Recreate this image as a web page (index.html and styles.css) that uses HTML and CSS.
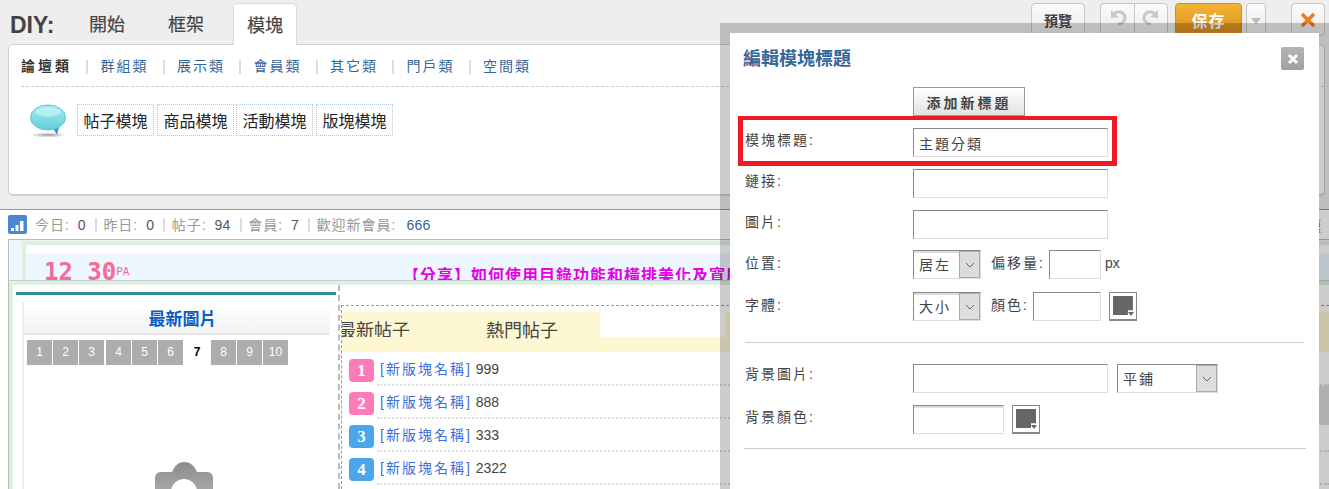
FILE: index.html
```html
<!DOCTYPE html>
<html lang="zh-Hant">
<head>
<meta charset="utf-8">
<title>DIY</title>
<link rel="stylesheet" href="styles.css">
</head>
<body>
<div class="page">
  <header class="toolbar">
    <div class="brand">DIY:</div>
    <nav class="tabs">
      <a class="tab">開始</a>
      <a class="tab">框架</a>
      <a class="tab tab-active">模塊</a>
    </nav>
    <div class="actions">
      <button class="tbtn preview">預覽</button>
      <div class="history">
        <button class="hbtn"><svg width="18" height="17" viewBox="0 0 18 17"><path d="M2 1 L2 9 L10 8 Z" fill="#c8c8c8"/><path d="M5 5 C9 1 16 3 16 9 C16 13 12 15 9 15" fill="none" stroke="#c8c8c8" stroke-width="3"/></svg></button>
        <button class="hbtn"><svg width="18" height="17" viewBox="0 0 18 17"><path d="M16 1 L16 9 L8 8 Z" fill="#c8c8c8"/><path d="M13 5 C9 1 2 3 2 9 C2 13 6 15 9 15" fill="none" stroke="#c8c8c8" stroke-width="3"/></svg></button>
      </div>
      <button class="save">保存</button>
      <button class="drop"><svg width="10" height="6" viewBox="0 0 10 6"><path d="M0 0H10L5 6Z" fill="#bbb"/></svg></button>
      <button class="quit"><svg width="16" height="16" viewBox="0 0 16 16"><path d="M2 2L14 14M14 2L2 14" stroke="#ee7b1c" stroke-width="3.4"/></svg></button>
    </div>
  </header>

  <div class="panel-wrap">
    <section class="panel">
      <div class="cats">
        <a class="cat cat-on">論壇類</a><i class="sep"></i>
        <a class="cat">群組類</a><i class="sep"></i>
        <a class="cat">展示類</a><i class="sep"></i>
        <a class="cat">會員類</a><i class="sep"></i>
        <a class="cat">其它類</a><i class="sep"></i>
        <a class="cat">門戶類</a><i class="sep"></i>
        <a class="cat">空間類</a>
      </div>
      <div class="blocks">
        <svg class="bubble" width="38" height="34" viewBox="0 0 38 34">
          <defs>
            <linearGradient id="bub" x1="0" y1="0" x2="0" y2="1"><stop offset="0" stop-color="#a6eef2"/><stop offset="1" stop-color="#62cfdc"/></linearGradient>
            <radialGradient id="sh"><stop offset="0" stop-color="#999"/><stop offset="1" stop-color="#fff"/></radialGradient>
          </defs>
          <ellipse cx="19" cy="31" rx="18" ry="2.5" fill="url(#sh)"/>
          <path d="M24 24 L28 31 L30 23 Z" fill="#2ea3b4"/>
          <ellipse cx="19" cy="13.500" rx="17.500" ry="12.500" fill="url(#bub)" stroke="#58c4d2"/>
          <ellipse cx="19" cy="8" rx="13" ry="5" fill="#c8f6f8" opacity=".6"/>
        </svg>
        <a class="block">帖子模塊</a>
        <a class="block">商品模塊</a>
        <a class="block">活動模塊</a>
        <a class="block">版塊模塊</a>
      </div>
    </section>
  </div>

  <section class="stats">
    <svg class="stats-icon" width="19" height="19" viewBox="0 0 19 19"><rect width="19" height="19" rx="2" fill="#4a87d3"/><path d="M3 13h3v3H3zM7.500 10h3v6h-3zM12 6h3.500v10H12z" fill="#fff"/></svg>
    <span class="stat">今日: <b>0</b></span>
    <span class="stat">昨日: <b>0</b></span>
    <span class="stat">帖子: <b>94</b></span>
    <span class="stat">會員: <b>7</b></span>
    <span class="stat">歡迎新會員: <b class="stat-new">666</b></span>
    <a class="stats-end">模</a>
  </section>

  <main class="preview-frame">
    <div class="head-band">
      <div class="head-inner">
        <div class="head-blue">
          <span class="clock">12 30<small>PA</small></span>
          <span class="marquee">【分享】如何使用目錄功能和橫排美化及寬屏</span>
        </div>
      </div>
    </div>
    <div class="body-band">
      <div class="body-inner">
        <aside class="left-col">
          <div class="teal"></div>
          <div class="pic-box">
            <h3 class="pic-title">最新圖片</h3>
            <div class="pager">
              <span class="pg">1</span><span class="pg">2</span><span class="pg">3</span><span class="pg">4</span><span class="pg">5</span><span class="pg">6</span><span class="pg pg-on">7</span><span class="pg">8</span><span class="pg">9</span><span class="pg">10</span>
            </div>
            <svg class="camera" width="60" height="40" viewBox="0 0 60 40">
              <defs><linearGradient id="cam" x1="0" y1="0" x2="0" y2="1"><stop offset="0" stop-color="#8c8c8c"/><stop offset="1" stop-color="#b4b4b4"/></linearGradient></defs>
              <path fill-rule="evenodd" fill="url(#cam)" d="M6 10 H17 C20 3 24 0 29 0 C35 0 39 3 42 10 H52 C56 10 58 13 58 16 V40 H0 V16 C0 13 2 10 6 10 Z M29 17 A13 13 0 1 0 29.010 17 Z"/>
            </svg>
          </div>
        </aside>
        <div class="right-col">
          <div class="list-box">
            <div class="list-tabs">
              <span class="ltab ltab-first">最新帖子</span>
              <span class="ltab ltab-second">熱門帖子</span>
              <span class="ltab-gap"></span>
            </div>
            <ul class="list">
              <li class="row"><span class="rank rank-pink">1</span><a class="link">[新版塊名稱]</a> 999</li>
              <li class="row"><span class="rank rank-pink">2</span><a class="link">[新版塊名稱]</a> 888</li>
              <li class="row"><span class="rank rank-blue">3</span><a class="link">[新版塊名稱]</a> 333</li>
              <li class="row"><span class="rank rank-blue">4</span><a class="link">[新版塊名稱]</a> 2322</li>
            </ul>
          </div>
        </div>
      </div>
    </div>
    <div class="side-tab"></div>
  </main>
</div>

<div class="dialog">
  <div class="dialog-head">
    <h2 class="dialog-title">編輯模塊標題</h2>
    <button class="dialog-close"><svg width="12" height="12" viewBox="0 0 12 12"><path d="M2 2L10 10M10 2L2 10" stroke="#fff" stroke-width="3"/></svg></button>
  </div>
  <form class="form">
    <div class="frow frow-add"><span class="flabel"></span><button type="button" class="add">添加新標題</button></div>
    <div class="frow"><label class="flabel">模塊標題:</label><input class="inp inp-full" value="主題分類"></div>
    <div class="frow"><label class="flabel">鏈接:</label><input class="inp inp-full"></div>
    <div class="frow"><label class="flabel">圖片:</label><input class="inp inp-full"></div>
    <div class="frow frow-pos"><label class="flabel">位置:</label>
      <div class="sel sel-s"><span class="sel-text">居左</span><span class="sel-arrow"><svg width="10" height="6" viewBox="0 0 10 6"><path d="M1 1L5 5L9 1" fill="none" stroke="#666"/></svg></span></div>
      <span class="ftext ftext-a">偏移量:</span><input class="inp inp-offset"><span class="ftext-px">px</span>
    </div>
    <div class="frow frow-font"><label class="flabel">字體:</label>
      <div class="sel sel-s"><span class="sel-text">大小</span><span class="sel-arrow"><svg width="10" height="6" viewBox="0 0 10 6"><path d="M1 1L5 5L9 1" fill="none" stroke="#666"/></svg></span></div>
      <span class="ftext ftext-a">顏色:</span><input class="inp inp-color"><span class="swatch swatch-a"><i class="tri"></i></span>
    </div>
    <hr class="rule rule-a">
    <div class="frow frow-bgimg"><label class="flabel">背景圖片:</label><input class="inp inp-full">
      <div class="sel sel-l"><span class="sel-text">平鋪</span><span class="sel-arrow"><svg width="10" height="6" viewBox="0 0 10 6"><path d="M1 1L5 5L9 1" fill="none" stroke="#666"/></svg></span></div>
    </div>
    <div class="frow"><label class="flabel">背景顏色:</label><input class="inp inp-bg"><span class="swatch swatch-b"><i class="tri"></i></span></div>
    <hr class="rule rule-b">
  </form>
</div>
<div class="redbox"></div>
</body>
</html>
```

FILE: styles.css
```css
* { box-sizing: border-box; }
html, body { margin: 0; padding: 0; height: 489px; overflow: hidden; }
body {
  background: #fff;
  color: #444;
  font-family: "Liberation Sans", "Noto Sans CJK TC", sans-serif;
  font-size: 14px;
  position: relative;
}
a { text-decoration: none; }
button { font-family: inherit; padding: 0; cursor: pointer; }

.page { width: 1329px; height: 489px; overflow: hidden; }

/* toolbar */
.toolbar { height: 44px; background: #eee; display: flex; align-items: flex-end; }
.brand { width: 71px; padding-left: 10px; height: 41px; line-height: 44px; font-size: 23px; font-weight: bold; color: #444; }
.tabs { display: flex; height: 41px; position: relative; z-index: 1; }
.tab { display: block; width: 64px; margin-right: 15px; text-align: center; font-size: 18px; line-height: 44px; color: #444; -webkit-text-stroke: .2px #444; }
.tab:nth-child(1) { margin-left: 4px; }
.tab-active { margin: 0 0 -1px; height: 42px; background: #fff; border: 1px solid #ddd8dd; border-bottom: 0; border-radius: 5px 5px 0 0; }
.actions { margin-left: auto; align-self: flex-start; display: flex; height: 44px; padding: 3px 4px 0 0; }
.tbtn, .hbtn, .drop, .quit { background: linear-gradient(#fbfbfb, #ececec); border: 1px solid #c9c3cb; border-radius: 4px; height: 33px; }
.preview { width: 54px; font-size: 14px; font-weight: bold; color: #444; margin-right: 15px; }
.history { display: flex; margin-right: 7px; }
.hbtn { width: 34px; display: flex; align-items: center; justify-content: center; padding-bottom: 4px; }
.hbtn:first-child { border-radius: 4px 0 0 4px; border-right: 0; }
.hbtn:last-child { border-radius: 0 4px 4px 0; }
.save { width: 67px; height: 33px; border: 1px solid #d38b22; border-radius: 4px; background: linear-gradient(#f2b634, #da8a1e); color: #fff; font-size: 16px; font-weight: bold; margin-right: 4px; letter-spacing: 1px; }
.drop { width: 20px; margin-right: 25px; }
.quit { width: 34px; display: flex; align-items: center; justify-content: center; }

/* panel */
.panel-wrap { height: 165px; background: #eee; padding: 0 4px 0 8px; }
.panel { height: 152px; background: #fff; border: 1px solid #d4cdd6; border-bottom-width: 2px; border-radius: 5px; }
.cats { display: flex; align-items: center; height: 42px; margin: 0 0 0 12px; border-bottom: 1px dashed #ccc; }
.cat { width: 49px; font-size: 14px; letter-spacing: 2px; color: #336699; white-space: nowrap; line-height: 46px; }
.cat-on { width: 52px; color: #333; font-weight: bold; letter-spacing: 3px; }
.sep { width: 2px; height: 14px; background: #ddd; margin: 2px 12.500px 0 13px; }
.blocks { display: flex; align-items: flex-start; padding: 17px 0 0 20px; gap: 3px; }
.bubble { margin-right: 7px; }
.block { width: 77px; height: 32px; border: 1px dotted #a9c5e6; text-align: center; line-height: 33px; font-size: 16px; color: #222; white-space: nowrap; }
.block:nth-of-type(3) { margin-left: -1px; }

/* stats */
.stats { height: 30px; border-top: 1px solid #999; background: #fff; display: flex; align-items: center; padding-left: 8px; color: #999; font-size: 14px; }
.stats-icon { margin-right: 8px; }
.stat { padding-right: 9px; margin-right: 6.500px; border-right: 2px solid #ddd; line-height: 14px; letter-spacing: 1px; white-space: nowrap; }
.stat:last-of-type { border: 0; }
.stat b { font-weight: normal; color: #556; margin-left: 3px; letter-spacing: .3px; }
.stat .stat-new { color: #369; margin-left: 5px; }
.stats-end { margin-left: auto; margin-right: 8px; color: #336699; }

/* preview */
.preview-frame { position: relative; height: 250px; margin-left: 8px; border-left: 1px solid #bbb; border-top: 1px solid #bbb; background: #fff; }
.head-band { height: 40px; overflow: hidden; padding: 1px 0 0 13px; background: #eef6fd; }
.head-inner { height: 45px; border: solid #e0efe0; border-width: 4px 0 0 4px; background: #fff; padding-top: 8px; }
.head-blue { height: 40px; background: #eef6ff; padding-top: 7px; display: flex; }
.clock { margin-left: 18px; font-family: "DejaVu Sans Mono", monospace; font-size: 24px; line-height: 24px; font-weight: bold; color: #f56a96; white-space: nowrap; width: 359px; }
.clock small { font-size: 11px; font-weight: normal; vertical-align: top; }
.marquee { font-size: 16px; font-weight: bold; line-height: 31px; letter-spacing: 1px; color: #e600e6; white-space: nowrap; }

.body-band { height: 209px; border-top: 1px solid #bfd0d8; background: #e0efe0; padding: 4px 0 0 4px; }
.body-inner { height: 204px; background: #fff; display: flex; }
.left-col { width: 327px; padding-left: 3px; border-right: 2px dashed #bbb; margin-right: 1px; flex: none; }
.teal { height: 3px; margin-top: 7px; background: #2f9090; width: 320px; }
.pic-box { margin: 7px 0 0 6px; width: 308px; height: 190px; border-left: 2px solid #eee; position: relative; }
.pic-title { margin: 0; height: 33px; padding-left: 11px; border-bottom: 2px solid #e8e8e8; background: linear-gradient(#fff, #f3f3f3); color: #0b5cc4; font-size: 17px; line-height: 35px; font-weight: bold; text-align: center; }
.pager { display: flex; gap: 1px; padding: 5px 0 0 3px; }
.pg { width: 25px; height: 25px; background: #adadad; color: #fff; font-size: 12px; line-height: 25px; text-align: center; }
.pg:nth-child(3) { margin-right: 1px; }
.pg-on { width: 26px; background: #fff; color: #000; font-weight: bold; }
.camera { position: absolute; left: 131px; top: 160px; }

.right-col { flex: 1; padding-top: 20px; overflow: hidden; }
.list-box { border: dashed #f08a1c; border-width: 1px 0 0 1px; padding-top: 6px; height: 184px; }
.list-tabs { height: 40px; background: #fdf7d2; display: flex; align-items: flex-start; }
.ltab { height: 25px; line-height: 38px; font-size: 18px; color: #444; white-space: nowrap; }
.ltab-first { width: 144px; text-indent: -4px; overflow: hidden; }
.ltab-second { width: 114px; }
.ltab-gap { width: 125px; height: 25px; background: #fff; }
.list { list-style: none; margin: 0; padding: 0; }
.row { height: 33px; position: relative; padding: 0 0 0 38px; line-height: 34px; font-size: 14px; color: #444; white-space: nowrap; }
.row::after { content: ""; position: absolute; left: 35px; right: 0; bottom: -1px; border-bottom: 2px dotted #ddd; }
.link { color: #3a6fe0; letter-spacing: 2px; }
.rank { position: absolute; left: 7px; top: 7px; width: 25px; height: 23px; border-radius: 4px; color: #fff; font-family: "Liberation Serif", serif; font-weight: bold; font-size: 17px; line-height: 23px; text-align: center; }
.rank-pink { background: #ff7ab8; }
.rank-blue { background: #4ba6ee; }
.side-tab { position: absolute; right: 0; top: 146px; width: 12px; height: 39px; background: #ddd; }

/* dialog */
.dialog { position: absolute; left: 720px; top: 23px; width: 609px; height: 480px; border: 10px solid rgba(0,0,0,.2); background: #fff; background-clip: padding-box; padding: 0 15px 0 13px; }
.dialog-head { height: 54px; padding-top: 14px; display: flex; justify-content: space-between; }
.dialog-title { margin: 0; color: #369; font-size: 18px; font-weight: bold; line-height: 24px; }
.dialog-close { width: 23px; height: 23px; border: 0; border-radius: 2px; background: linear-gradient(#b4b4b4, #a0a0a0); display: flex; align-items: center; justify-content: center; }
.form { padding-left: 2px; }
.frow { height: 29px; margin-bottom: 12px; display: flex; align-items: flex-start; }
.frow-pos { margin-top: -1px; margin-bottom: 13px; }
.frow-font { margin-bottom: 21px; }
.flabel { width: 168px; flex: none; font-size: 14px; line-height: 24px; letter-spacing: 2px; color: #444; }
.frow-pos .flabel, .frow-font .flabel { line-height: 26px; }
.frow-bgimg .flabel { line-height: 21px; }
.add { width: 112px; height: 29px; border: 1px solid #999; background: linear-gradient(#fff, #e2e2e2); font-size: 14px; font-weight: bold; letter-spacing: 3px; color: #444; }
.inp { height: 29px; border: 1px solid; border-color: #8a8a8a #ddd #ddd #8a8a8a; padding: 2px 5px; font-family: inherit; font-size: 14px; color: #444; background: #fff; outline: 0; letter-spacing: 2px; }
.inp-full { width: 195px; }
.inp-offset { width: 52px; margin-left: 4px; }
.inp-color { width: 68px; margin-left: 4px; }
.inp-bg { width: 91px; box-shadow: inset 0 2px 0 #ddd; }
.ftext { font-size: 14px; line-height: 26px; letter-spacing: 2px; color: #444; }
.ftext-a { margin-left: 10px; white-space: nowrap; }
.ftext-px { margin-left: 4px; line-height: 26px; }
.sel { height: 29px; display: flex; border: 1px solid; border-color: #8a8a8a #ddd #ddd #8a8a8a; background: #fff; box-shadow: inset 0 2px 0 #ddd; }
.sel-s { width: 68px; }
.sel-l { width: 101px; margin-left: 9px; box-shadow: none; }
.sel-text { flex: 1; padding-left: 5px; line-height: 28px; font-size: 14px; letter-spacing: 2px; color: #444; white-space: nowrap; }
.sel-arrow { width: 21px; background: #ddd; border: 1px solid #aaa; display: flex; align-items: center; justify-content: center; }
.swatch { width: 28px; height: 29px; border: 1px solid #888; border-bottom-width: 2px; background: #fff; padding: 3px; position: relative; display: block; }
.swatch::before { content: ""; display: block; width: 20px; height: 19px; background: #666; clip-path: polygon(0 0, 100% 0, 100% 75%, 75% 75%, 75% 100%, 0 100%); }
.tri { position: absolute; right: 2px; bottom: 3px; border: 3.500px solid transparent; border-top: 4px solid #666; border-bottom: 0; }
.swatch-a { margin-left: 8px; }
.swatch-b { margin-left: 8px; }
.rule { border: 0; border-top: 1px solid #ccc; margin: 0; }
.rule-a { margin-bottom: 21px; width: 559px; }
.rule-b { width: 562px; margin: 14px 0 0 -1px; }
.redbox { position: absolute; left: 738px; top: 116px; width: 379px; height: 50px; border: 5px solid #ed1c24; border-top-width: 4px; }
```
